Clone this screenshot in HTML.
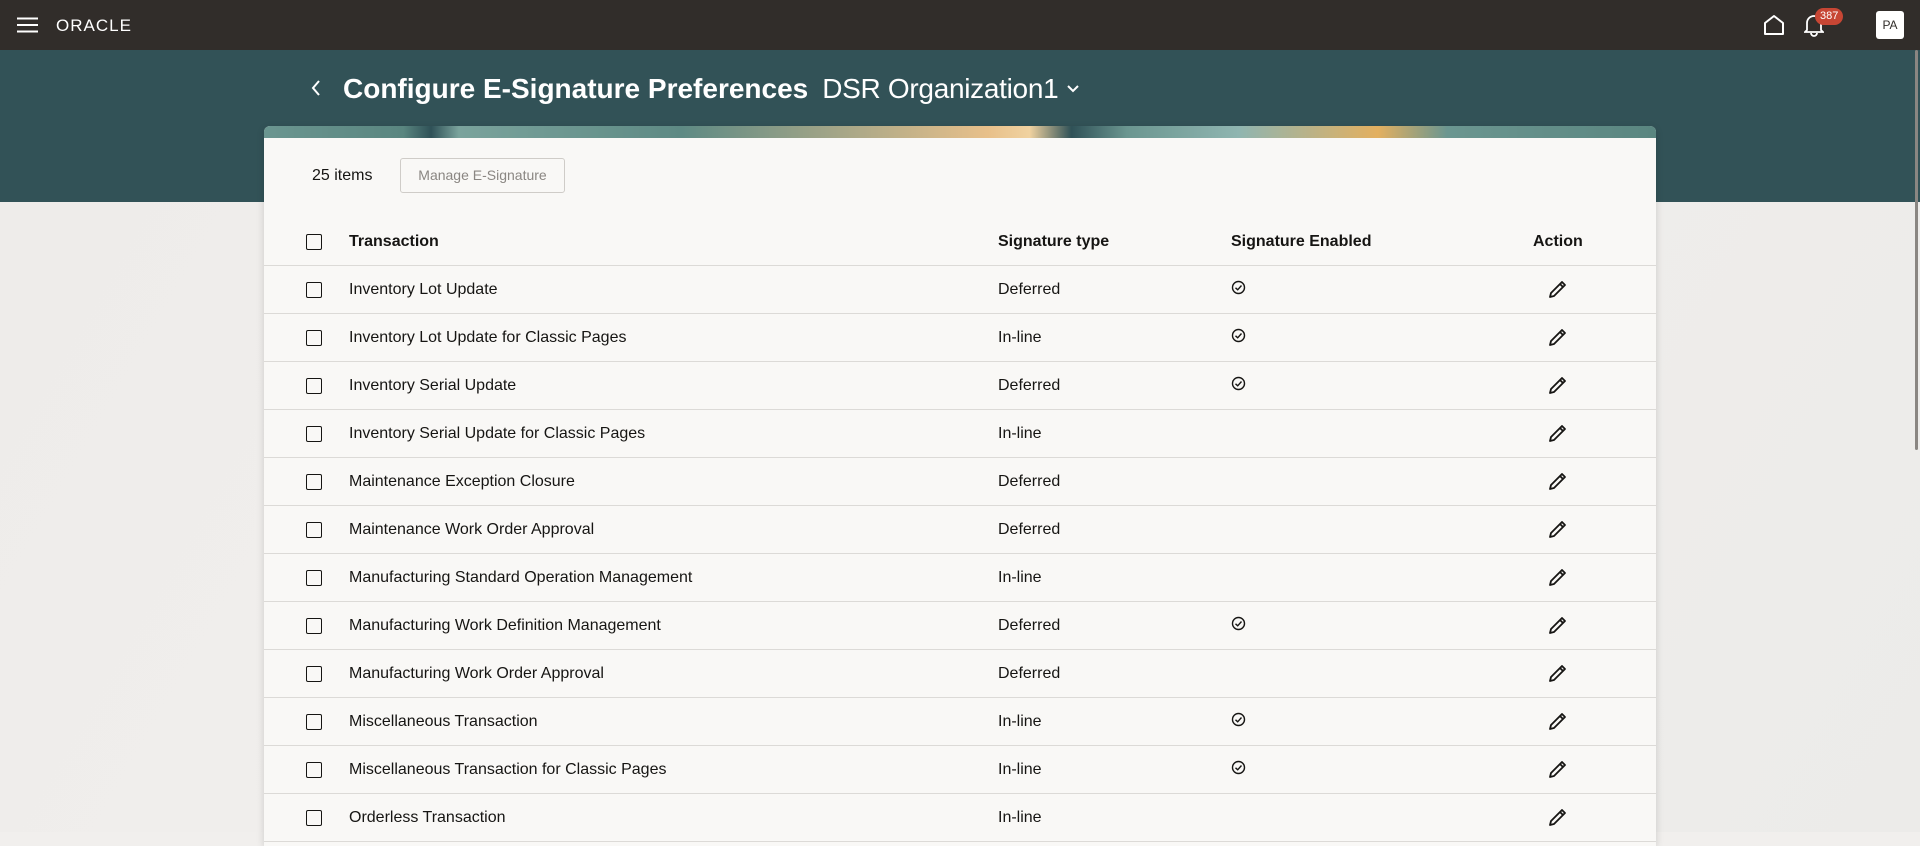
<!DOCTYPE html>
<html><head><meta charset="utf-8"><style>
*{margin:0;padding:0;box-sizing:border-box}
body{width:1920px;height:832px;overflow:hidden;background:#f1efed;font-family:"Liberation Sans",sans-serif;color:#161513;position:relative}
.top{position:absolute;left:0;top:0;width:1920px;height:50px;background:#312d2a}
.band{position:absolute;left:0;top:50px;width:1920px;height:152px;background:#325257}
.bgpat{position:absolute;left:0;top:202px;width:1920px;height:630px;background:linear-gradient(120deg,#eeecea 0,#f1efed 40%,#ecebe9 100%)}
.card{position:absolute;left:264px;top:126px;width:1392px;height:720px;background:#f9f8f6;border-radius:6px 6px 0 0;box-shadow:0 2px 8px rgba(0,0,0,.15);overflow:hidden}
.banner{position:absolute;left:0;top:0;width:100%;height:12px;background:linear-gradient(90deg,#6b9690 0,#5a8680 10%,#2f5157 12%,#7aa39c 14%,#5e8a84 30%,#e8c08a 52%,#f0d2a0 55%,#2f5157 58%,#6b9690 62%,#8fb5b0 70%,#e3b060 80%,#6b9690 85%,#5a8680 100%)}
.title{position:absolute;left:343px;top:73px;font-size:28px;font-weight:bold;color:#fff;white-space:nowrap;display:flex;align-items:center}
.title span{font-weight:normal;margin-left:14px;font-size:28px;letter-spacing:-0.3px}
.row{position:absolute;left:0;width:1392px;height:48px;border-bottom:1px solid #dcdad7;font-size:16px}
.row div{position:absolute;top:15px}
.cb{position:absolute;left:42px;top:16px!important;width:16px;height:16px;border:1.5px solid #161513;border-radius:2px}
.c1{left:85px}.c2{left:734px}.c3{left:967px}
.hdr{font-weight:bold}
.chk{left:967px;top:14px!important}
.pen{left:1283px;top:12px!important}
</style></head><body>
<div class="top">
 <svg style="position:absolute;left:17px;top:17px" width="21" height="16"><path d="M0 1.5H21M0 8H21M0 14.5H21" stroke="#fff" stroke-width="2"/></svg>
 <div style="position:absolute;left:56px;top:16px;color:#fff;font-size:17px;letter-spacing:1px">ORACLE</div>
 <svg style="position:absolute;left:1763px;top:14px" width="22" height="22"><path d="M2 20V9L11 2L20 9V20Z" fill="none" stroke="#fff" stroke-width="2" stroke-linejoin="round"/></svg>
 <svg style="position:absolute;left:1804px;top:13px" width="20" height="24"><path d="M3 17V10a7 7 0 0 1 14 0v7l2 2H1Z M7 20a3 3 0 0 0 6 0" fill="none" stroke="#fff" stroke-width="1.8"/></svg>
 <div style="position:absolute;left:1815px;top:8px;background:#c74634;color:#fff;font-size:11px;border-radius:9px;padding:2px 5px;line-height:13px">387</div>
 <div style="position:absolute;left:1876px;top:11px;width:28px;height:28px;background:#fff;border-radius:3px;color:#312d2a;font-size:12px;text-align:center;line-height:28px">PA</div>
</div>
<div class="band"></div>
<div class="bgpat"></div>
<svg style="position:absolute;left:310px;top:79px" width="12" height="18"><path d="M9 2L3 9L9 16" fill="none" stroke="#fff" stroke-width="2"/></svg>
<div class="title">Configure E-Signature Preferences<span>DSR Organization1</span><svg style="margin-left:8px" width="14" height="10"><path d="M2 2L7 7L12 2" fill="none" stroke="#fff" stroke-width="2"/></svg></div>
<div class="card">
 <div class="banner"></div>
 <div style="position:absolute;left:48px;top:41px;font-size:16px">25 items</div>
 <div style="position:absolute;left:136px;top:32px;width:165px;height:35px;border:1px solid #cfccc8;border-radius:3px;font-size:14px;color:#8a8682;text-align:center;line-height:33px">Manage E-Signature</div>
 <div id="rows"></div>
</div>
<div style="position:absolute;left:1915px;top:50px;width:3px;height:400px;background:#8a8682;border-radius:2px"></div>
<script>
var d=[["Inventory Lot Update","Deferred",1],["Inventory Lot Update for Classic Pages","In-line",1],["Inventory Serial Update","Deferred",1],["Inventory Serial Update for Classic Pages","In-line",0],["Maintenance Exception Closure","Deferred",0],["Maintenance Work Order Approval","Deferred",0],["Manufacturing Standard Operation Management","In-line",0],["Manufacturing Work Definition Management","Deferred",1],["Manufacturing Work Order Approval","Deferred",0],["Miscellaneous Transaction","In-line",1],["Miscellaneous Transaction for Classic Pages","In-line",1],["Orderless Transaction","In-line",0]];
var chk='<svg width="15" height="15"><circle cx="7.5" cy="7.5" r="6" fill="none" stroke="#161513" stroke-width="1.4"/><path d="M4.5 7.8L6.7 9.8L10.5 5.5" fill="none" stroke="#161513" stroke-width="1.4"/></svg>';
var pen='<svg width="22" height="22"><path d="M3 19L4 15L15 4L18 7L7 18Z M13 6L16 9" fill="none" stroke="#161513" stroke-width="1.8" stroke-linejoin="round"/></svg>';
var h='<div class="row hdr" style="top:92px;height:48px"><div class="cb"></div><div class="c1">Transaction</div><div class="c2">Signature type</div><div class="c3">Signature Enabled</div><div style="left:1269px">Action</div></div>';
d.forEach(function(r,i){h+='<div class="row" style="top:'+(140+48*i)+'px"><div class="cb"></div><div class="c1">'+r[0]+'</div><div class="c2">'+r[1]+'</div>'+(r[2]?'<div class="chk">'+chk+'</div>':'')+'<div class="pen">'+pen+'</div></div>';});
document.getElementById('rows').innerHTML=h;
</script>
</body></html>
